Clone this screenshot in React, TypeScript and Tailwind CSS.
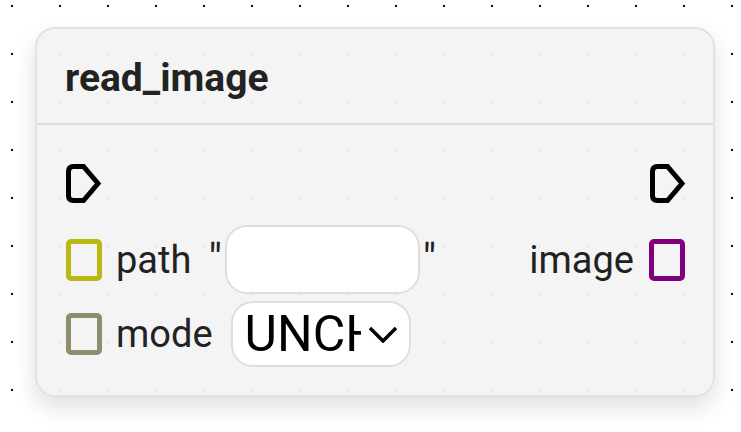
import React from "react";

type PinProps = { color: string };

function DataPin({ color }: PinProps) {
  return (
    <div
      className="h-[42px] w-[36px] shrink-0 rounded-[5px] border-[5px]"
      style={{ borderColor: color }}
    />
  );
}

function ExecPin() {
  return (
    <svg width="35" height="39" viewBox="0 0 35 39" className="shrink-0">
      <path
        d="M7.5 2.5 H17.5 L32 19.5 L17.5 36.5 H7.5 Q2.5 36.5 2.5 31.5 V7.5 Q2.5 2.5 7.5 2.5 Z"
        fill="none"
        stroke="#000"
        strokeWidth="5"
        strokeLinejoin="miter"
      />
    </svg>
  );
}

export default function App() {
  return (
    <div className="relative h-[432px] w-[741px] overflow-hidden bg-white bg-[radial-gradient(circle,#111_1.1px,transparent_1.6px)] bg-[size:48px_48px] bg-[position:-12px_-18px] font-['Roboto',sans-serif]">
      <div className="absolute left-[35px] top-[27px] flex h-[370px] w-[680px] flex-col rounded-[20px] border-2 border-[#e2e2e2] bg-[rgba(243,243,243,0.93)] shadow-[0_10px_22px_rgba(0,0,0,0.13)]">
        <div className="flex h-[96px] items-center border-b-2 border-[#dddddd] px-[28px] pt-[4px]">
          <span className="text-[39px] font-bold leading-[46px] text-[#222]">read_image</span>
        </div>

        <div className="flex flex-1 flex-col pl-[29px] pr-[28px] pt-[39px]">
          <div className="flex h-[39px] items-center justify-between">
            <ExecPin />
            <ExecPin />
          </div>

          <div className="mt-[22px] flex h-[69px] items-center">
            <DataPin color="#bab813" />
            <span className="ml-[14px] text-[38px] leading-none text-[#222]">path</span>
            <span className="ml-[17px] text-[42px] leading-none text-[#222]">"</span>
            <div className="ml-[3px] h-[69px] w-[195px] rounded-[22px] border-2 border-[#dedede] bg-white" />
            <span className="ml-[3px] text-[42px] leading-none text-[#222]">"</span>
            <div className="flex-1" />
            <span className="text-[38px] leading-none text-[#222]">image</span>
            <div className="ml-[15px]">
              <DataPin color="#800080" />
            </div>
          </div>

          <div className="mt-[7px] flex h-[66px] items-center">
            <DataPin color="#8e8e6c" />
            <span className="ml-[14px] text-[38px] leading-none text-[#222]">mode</span>
            <div className="ml-[18px] flex h-[66px] w-[180px] items-center rounded-[22px] border-2 border-[#dedede] bg-white pl-[12px]">
              <div className="w-[116px] overflow-hidden whitespace-nowrap text-[50px] leading-none text-black">
                UNCHANGED
              </div>
              <svg width="30" height="17" viewBox="0 0 30 17" className="ml-[7px]">
                <polyline points="2,2 15,15 28,2" fill="none" stroke="#000" strokeWidth="3.5" />
              </svg>
            </div>
          </div>
        </div>
      </div>
    </div>
  );
}
